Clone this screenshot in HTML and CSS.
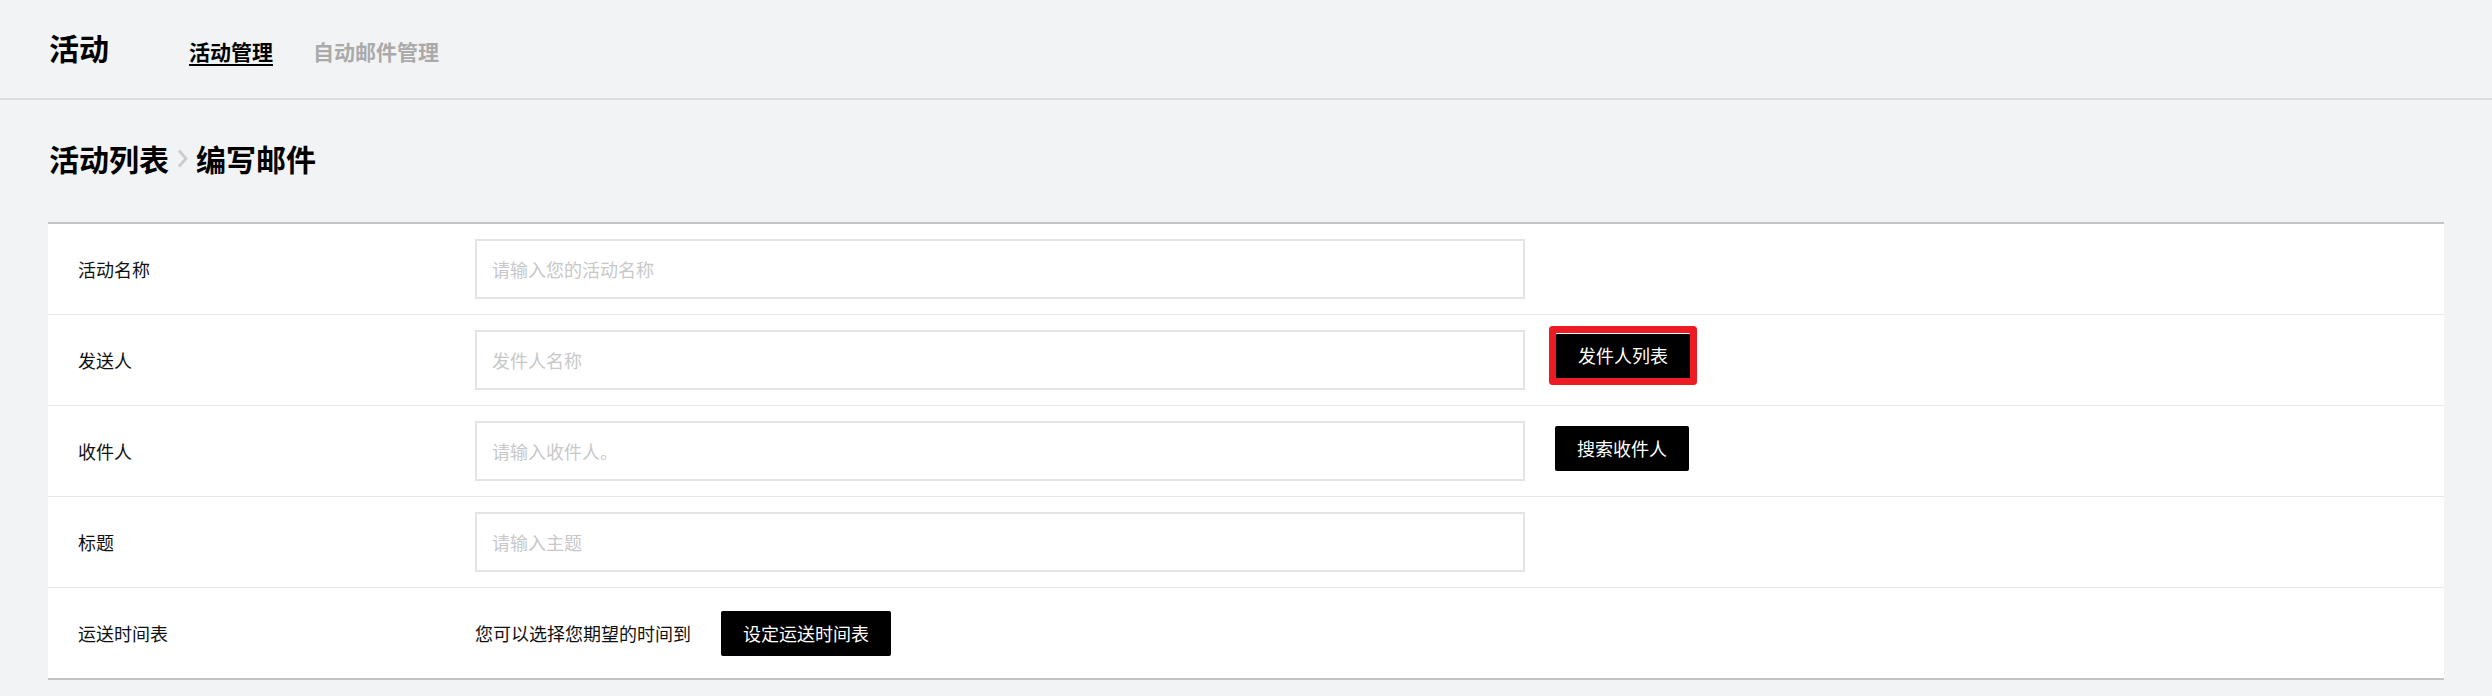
FILE: index.html
```html
<!DOCTYPE html>
<html lang="zh-CN">
<head>
<meta charset="utf-8">
<title>编写邮件</title>
<link rel="stylesheet" href="styles.css">
</head>
<body>
<header class="topbar">
  <h1 class="brand">活动</h1>
  <nav class="nav">
    <a class="nav-item active">活动管理</a>
    <a class="nav-item">自动邮件管理</a>
  </nav>
</header>

<main class="page">
  <div class="crumbs">
    <span class="crumb">活动列表</span>
    <svg class="crumb-sep" width="11" height="19" viewBox="0 0 11 19"><polyline points="2,1.5 9,9.5 2,17.5" fill="none" stroke="#cccccc" stroke-width="2.8"/></svg>
    <span class="crumb">编写邮件</span>
  </div>

  <section class="form">
    <div class="row">
      <div class="label">活动名称</div>
      <input class="field" type="text" placeholder="请输入您的活动名称">
    </div>
    <div class="row">
      <div class="label">发送人</div>
      <input class="field" type="text" placeholder="发件人名称">
      <button class="btn btn-marked">发件人列表</button>
    </div>
    <div class="row">
      <div class="label">收件人</div>
      <input class="field" type="text" placeholder="请输入收件人。">
      <button class="btn btn-side">搜索收件人</button>
    </div>
    <div class="row">
      <div class="label">标题</div>
      <input class="field" type="text" placeholder="请输入主题">
    </div>
    <div class="row">
      <div class="label">运送时间表</div>
      <span class="hint">您可以选择您期望的时间到</span>
      <button class="btn btn-schedule">设定运送时间表</button>
    </div>
  </section>
</main>
</body>
</html>
```

FILE: styles.css
```css
* { box-sizing: border-box; }

html, body {
  margin: 0;
  padding: 0;
}

body {
  background: #f2f3f5;
  font-family: "Noto Sans CJK SC", "Noto Sans", sans-serif;
  color: #111;
}

.topbar {
  height: 100px;
  border-bottom: 2px solid #dcdde0;
  display: flex;
  align-items: baseline;
  padding: 27px 49px 0;
}

.brand {
  margin: 0;
  font-size: 30px;
  line-height: 40px;
  font-weight: 700;
  color: #000;
}

.nav {
  display: flex;
  gap: 40px;
  margin-left: 80px;
}

.nav-item {
  font-size: 21px;
  font-weight: 700;
  color: #aaa;
  text-decoration: none;
  line-height: 30px;
}

.nav-item.active {
  color: #000;
  text-decoration: underline;
  text-decoration-thickness: 2px;
  text-underline-offset: 4px;
}

.page {
  padding: 0 48px;
}

.crumbs {
  display: flex;
  align-items: center;
  gap: 8px;
  height: 122px;
  padding-bottom: 6px;
  padding-left: 1px;
}

.crumb {
  font-size: 30px;
  font-weight: 700;
  color: #000;
  line-height: 40px;
}

.crumb-sep {
  display: block;
}

.form {
  background: #fff;
  border-top: 2px solid #c4c4c4;
  border-bottom: 2px solid #c4c4c4;
}

.row {
  display: flex;
  align-items: center;
  height: 91px;
  border-bottom: 1px solid #e6e6e6;
}

.row:last-child {
  border-bottom: none;
  height: 90px;
}

.label {
  width: 427px;
  padding-left: 30px;
  font-size: 18px;
  color: #111;
}

.field {
  width: 1050px;
  height: 60px;
  border: 2px solid #e4e4e4;
  padding: 0 15px;
  font-family: inherit;
  font-size: 18px;
  color: #333;
  background: #fff;
  outline: none;
  margin-top: -1px;
}

.field::placeholder {
  color: #c8c8c8;
}

.btn {
  height: 45px;
  padding: 0 22px;
  background: #000;
  color: #fff;
  border: none;
  border-radius: 2px;
  font-family: inherit;
  font-size: 18px;
  line-height: 45px;
  cursor: pointer;
}

.btn-side {
  margin-left: 30px;
  margin-bottom: 6px;
}

.btn-marked {
  margin-left: 31px;
  margin-bottom: 9px;
  border-radius: 1px;
  box-shadow: 0 0 0 7px #ed1c24, inset 0 1px 0 #fff;
}

.hint {
  font-size: 18px;
  color: #111;
}

.btn-schedule {
  margin-left: 30px;
}
```
